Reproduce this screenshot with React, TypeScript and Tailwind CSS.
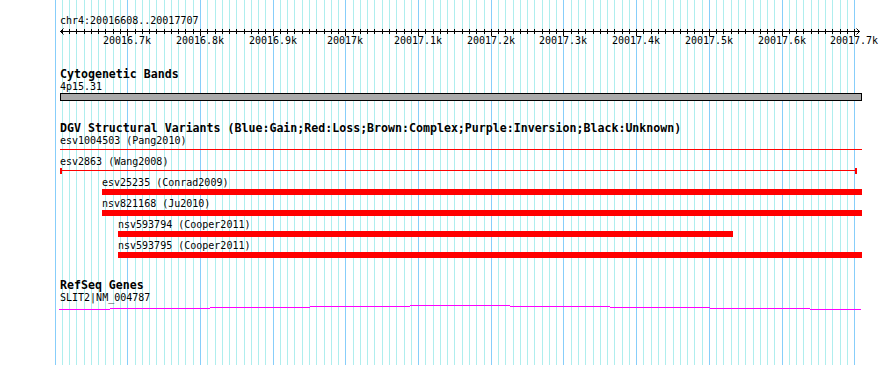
import React from "react";

type Glyph = "line" | "lineTicks" | "box";

type Feature = {
  name: string;
  source: string;
  start: number;
  end: number;
  glyph: Glyph;
};

// view + scale
const VIEW_START = 20016608;
const VIEW_END = 20017707;
const ORIGIN = 60.4;
const PX_PER_BP = 0.727;
const PANEL_LEFT = 60;
const PANEL_RIGHT = 862;

const toX = (bp: number) => ORIGIN + (bp - VIEW_START) * PX_PER_BP;
const clampX = (x: number) => Math.min(Math.max(x, PANEL_LEFT), PANEL_RIGHT);

// 20017000 -> "20017k", 20016700 -> "20016.7k"
const kb = (bp: number) => `${(bp / 1000).toFixed(1).replace(/\.0$/, "")}k`;

const variants: Feature[] = [
  { name: "esv1004503", source: "Pang2010", start: 20015200, end: 20019900, glyph: "line" },
  { name: "esv2863", source: "Wang2008", start: 20016608, end: 20017705, glyph: "lineTicks" },
  { name: "esv25235", source: "Conrad2009", start: 20016665, end: 20018900, glyph: "box" },
  { name: "nsv821168", source: "Ju2010", start: 20016665, end: 20018400, glyph: "box" },
  { name: "nsv593794", source: "Cooper2011", start: 20016687, end: 20017533, glyph: "box" },
  { name: "nsv593795", source: "Cooper2011", start: 20016687, end: 20018100, glyph: "box" },
];

const gridStops: number[] = [];
for (let bp = 20016600; bp <= 20017700; bp += 10) gridStops.push(bp);

const mono = "font-['DejaVu_Sans_Mono','Liberation_Mono',monospace]";

function Grid() {
  return (
    <svg className="absolute inset-0" width={890} height={365} shapeRendering="crispEdges">
      {gridStops.map((bp) => {
        const x = Math.round(toX(bp)) + 0.5;
        const major = bp % 100 === 0;
        return (
          <line
            key={bp}
            x1={x}
            x2={x}
            y1={0}
            y2={365}
            stroke={major ? "#87cefa" : "#afeeee"}
            strokeWidth={1}
          />
        );
      })}
    </svg>
  );
}

function Ruler() {
  const ticks = gridStops.filter((bp) => bp > VIEW_START && bp <= VIEW_END);
  return (
    <svg width={890} height={21} className={`block ${mono}`}>
      <g shapeRendering="crispEdges">
        <line x1={60} x2={860} y1={4.5} y2={4.5} stroke="#000" />
        {ticks.map((bp) => {
          const x = Math.round(toX(bp)) + 0.5;
          const major = bp % 100 === 0;
          return <line key={bp} x1={x} x2={x} y1={2} y2={major ? 9 : 7} stroke="#000" />;
        })}
      </g>
      {/* arrow heads */}
      <path d="M60.5 4.5 L63.5 1.5 M60.5 4.5 L63.5 7.5" stroke="#000" fill="none" />
      <path d="M859.5 4.5 L856.5 1.5 M859.5 4.5 L856.5 7.5" stroke="#000" fill="none" />
      {ticks
        .filter((bp) => bp % 100 === 0)
        .map((bp) => (
          <text
            key={bp}
            x={Math.round(toX(bp))}
            y={17}
            fontSize={10}
            textAnchor="middle"
            fill="#000"
          >
            {kb(bp)}
          </text>
        ))}
    </svg>
  );
}

function TrackTitle({ children }: { children: React.ReactNode }) {
  return <div className="h-[13px] leading-[13px] text-[11.6px] font-bold pl-[60px] whitespace-nowrap">{children}</div>;
}

function VariantRow({ f }: { f: Feature }) {
  const x0 = Math.round(clampX(toX(f.start)));
  const x1 = Math.round(clampX(toX(f.end)));
  return (
    <div className="h-[21px]">
      <div className="h-[12px] leading-[12px] text-[10px] whitespace-nowrap" style={{ paddingLeft: x0 }}>
        {f.name} ({f.source})
      </div>
      {f.glyph === "box" ? (
        <div className="h-[6px] bg-[#ff0000]" style={{ marginLeft: x0, width: x1 - x0 }} />
      ) : (
        <div className="flex h-[6px]" style={{ marginLeft: x0, width: x1 - x0 }}>
          {f.glyph === "lineTicks" && <div className="w-[2px] h-[6px] bg-[#ff0000]" />}
          <div className="flex-1 mt-[2px] h-px bg-[#ff0000]" />
          {f.glyph === "lineTicks" && <div className="w-[2px] h-[6px] bg-[#ff0000] mr-px" />}
        </div>
      )}
    </div>
  );
}

function GeneModel() {
  // intron hat drawn in 100px steps
  const steps = [
    [59, 110, 5],
    [110, 210, 4],
    [210, 310, 3],
    [310, 410, 2],
    [410, 510, 1],
    [510, 610, 2],
    [610, 710, 3],
    [710, 810, 4],
    [810, 861, 5],
  ];
  return (
    <svg width={890} height={8} className="block" shapeRendering="crispEdges">
      {steps.map(([a, b, y]) => (
        <rect key={a} x={a} y={y} width={b - a} height={1} fill="#ff00ff" />
      ))}
    </svg>
  );
}

export default function App() {
  return (
    <div className={`relative w-[890px] h-[365px] overflow-hidden bg-white text-black ${mono}`}>
      <Grid />
      <div className="relative">
        {/* ruler */}
        <div className="pt-[15px]">
          <div className="h-[12px] leading-[12px] text-[10px] pl-[60px]">chr4:20016608..20017707</div>
          <Ruler />
        </div>

        {/* cytogenetic bands */}
        <div className="mt-[20px]">
          <TrackTitle>Cytogenetic Bands</TrackTitle>
          <div className="h-[12px] leading-[12px] text-[10px] pl-[60px]">4p15.31</div>
          <svg width={890} height={9} className="block" shapeRendering="crispEdges">
            <rect x={60.5} y={0.5} width={801} height={7} fill="#aaaaaa" stroke="#000" />
          </svg>
        </div>

        {/* structural variants */}
        <div className="mt-[20px]">
          <TrackTitle>DGV Structural Variants (Blue:Gain;Red:Loss;Brown:Complex;Purple:Inversion;Black:Unknown)</TrackTitle>
          {variants.map((f) => (
            <VariantRow key={f.name} f={f} />
          ))}
        </div>

        {/* refseq */}
        <div className="mt-[18px]">
          <TrackTitle>RefSeq Genes</TrackTitle>
          <div className="h-[12px] leading-[12px] text-[10px] pl-[60px]">SLIT2|NM_004787</div>
          <GeneModel />
        </div>
      </div>
    </div>
  );
}
